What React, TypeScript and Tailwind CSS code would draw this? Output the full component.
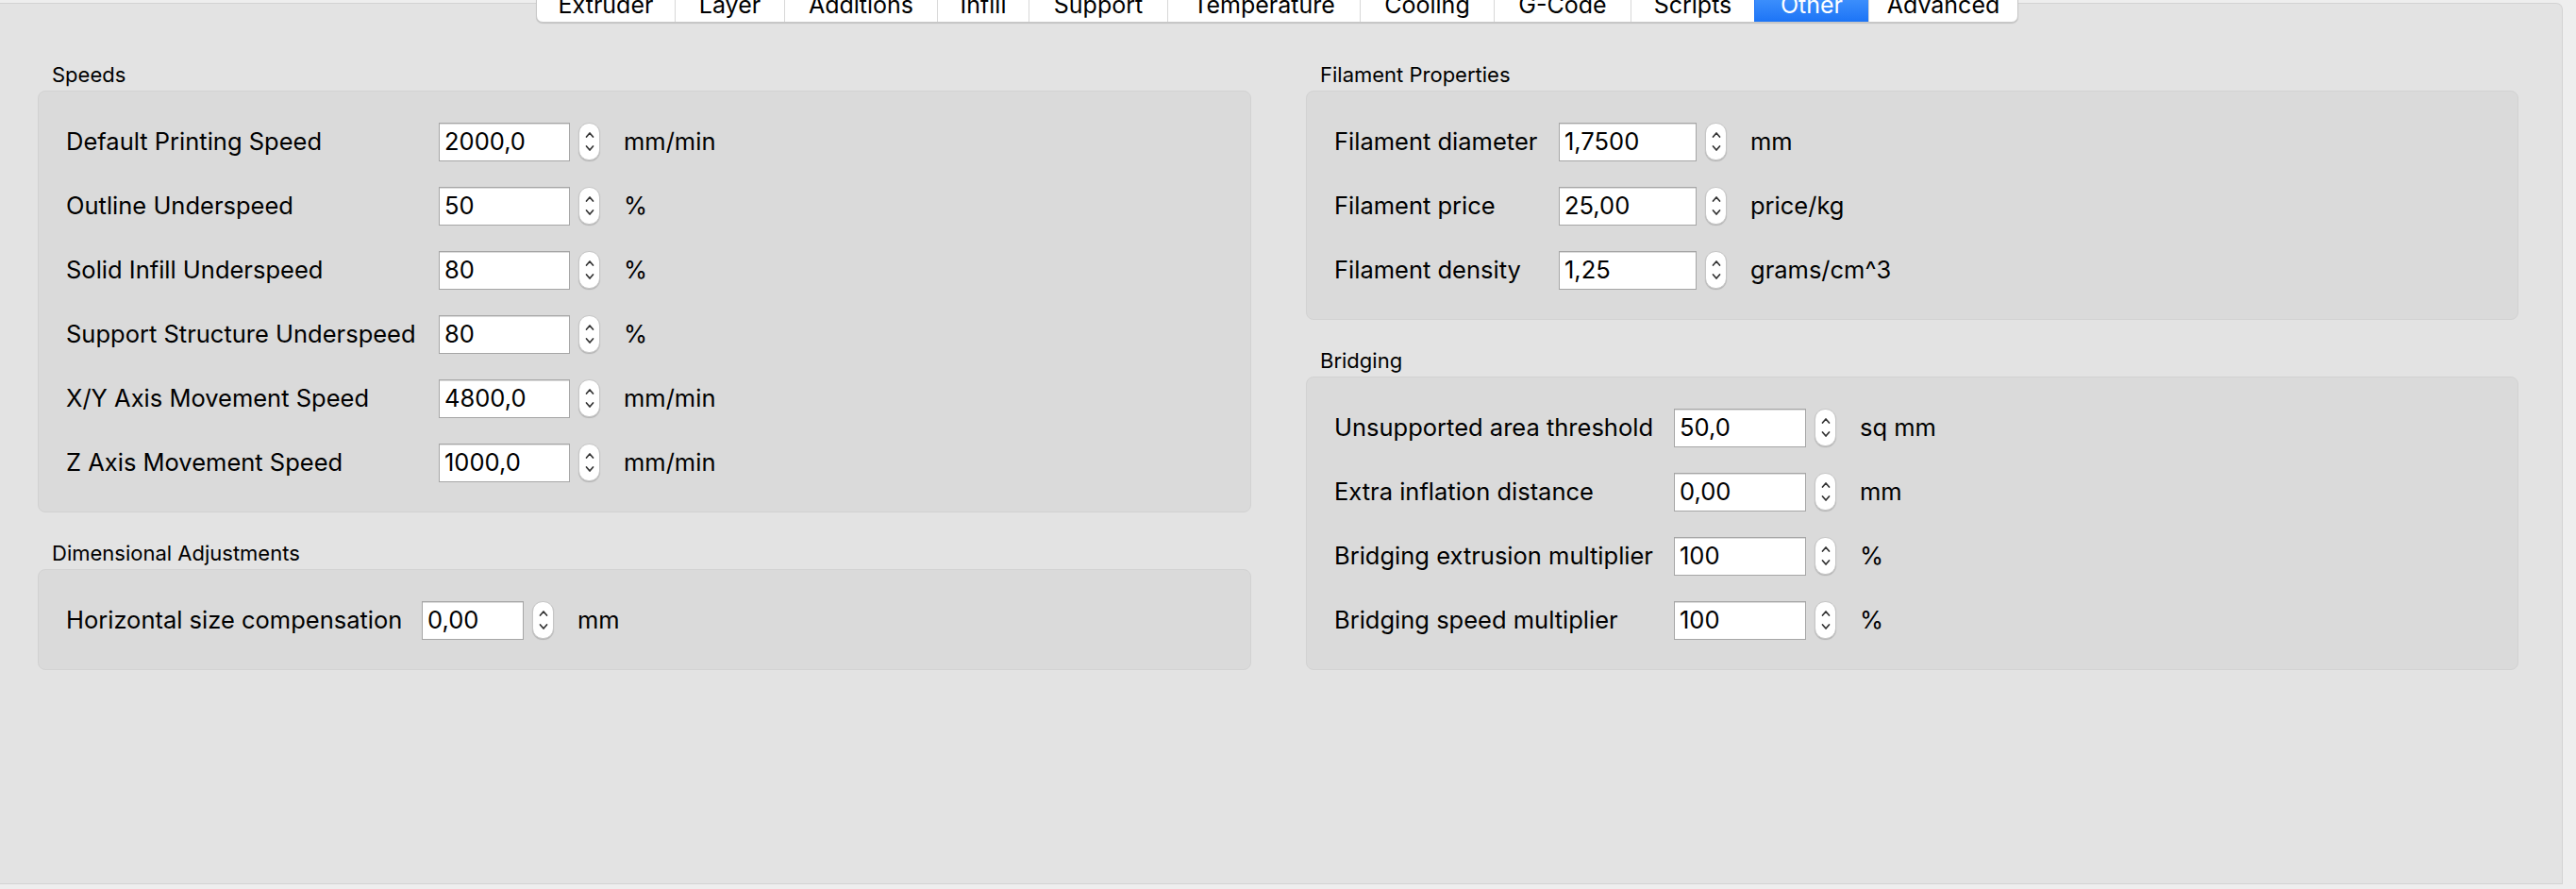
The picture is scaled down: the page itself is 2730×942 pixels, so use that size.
import React from 'react';

type Row = [string, string, string];

const tabs: { name: string; w: number }[] = [
    { name: 'Extruder', w: 146 },
    { name: 'Layer', w: 116 },
    { name: 'Additions', w: 162 },
    { name: 'Infill', w: 97 },
    { name: 'Support', w: 147 },
    { name: 'Temperature', w: 204 },
    { name: 'Cooling', w: 142 },
    { name: 'G-Code', w: 145 },
    { name: 'Scripts', w: 131 },
    { name: 'Other', w: 121 },
    { name: 'Advanced', w: 158 },
];

const speeds: Row[] = [
    ['Default Printing Speed', '2000,0', 'mm/min'],
    ['Outline Underspeed', '50', '%'],
    ['Solid Infill Underspeed', '80', '%'],
    ['Support Structure Underspeed', '80', '%'],
    ['X/Y Axis Movement Speed', '4800,0', 'mm/min'],
    ['Z Axis Movement Speed', '1000,0', 'mm/min'],
];

const dimensional: Row[] = [['Horizontal size compensation', '0,00', 'mm']];

const filament: Row[] = [
    ['Filament diameter', '1,7500', 'mm'],
    ['Filament price', '25,00', 'price/kg'],
    ['Filament density', '1,25', 'grams/cm^3'],
];

const bridging: Row[] = [
    ['Unsupported area threshold', '50,0', 'sq mm'],
    ['Extra inflation distance', '0,00', 'mm'],
    ['Bridging extrusion multiplier', '100', '%'],
    ['Bridging speed multiplier', '100', '%'],
];

const Stepper: React.FC = () => (
    <div className="w-[23px] h-[40px] rounded-[11px] bg-white border border-[#c6c6c6] shadow-[0_1px_1px_rgba(0,0,0,0.18)] flex flex-col items-center justify-between py-[8px]">
        <svg width="10" height="8" viewBox="0 0 10 8" fill="none">
            <path d="M1.5 6 L5 2 L8.5 6" stroke="#333" strokeWidth="1.7" strokeLinecap="round" strokeLinejoin="round" />
        </svg>
        <svg width="10" height="8" viewBox="0 0 10 8" fill="none">
            <path d="M1.5 2 L5 6 L8.5 2" stroke="#333" strokeWidth="1.7" strokeLinecap="round" strokeLinejoin="round" />
        </svg>
    </div>
);

const FieldRow: React.FC<{ row: Row; labelW: string; inputW: string }> = ({ row, labelW, inputW }) => (
    <div className="flex items-center h-[42px]">
        <div className={`${labelW} shrink-0 whitespace-nowrap`}>{row[0]}</div>
        <div className={`${inputW} h-[41px] bg-white border border-[#a6a6a6] shadow-[inset_0_1px_0_#dcdcdc] flex items-center pl-[5px]`}>
            {row[1]}
        </div>
        <div className="ml-[9px]">
            <Stepper />
        </div>
        <div className="ml-[25px] whitespace-nowrap">{row[2]}</div>
    </div>
);

const Group: React.FC<{ title: string; rows: Row[]; labelW: string; inputW: string }> = ({ title, rows, labelW, inputW }) => (
    <div>
        <div className="text-[22px] leading-[22px] h-[22px] mb-[6px] pl-[15px]">{title}</div>
        <div className="bg-[#dadada] border border-[#d2d2d2] rounded-[8px] pt-[32px] pb-[31px] pl-[29px] flex flex-col gap-[26px] text-[25.5px]">
            {rows.map((r) => (
                <FieldRow key={r[0]} row={r} labelW={labelW} inputW={inputW} />
            ))}
        </div>
    </div>
);

export default function App() {
    return (
        <div
            className="w-[2730px] h-[942px] bg-[#eeeeee] pt-[3px] overflow-hidden text-black"
            style={{ fontFamily: 'Inter, "Liberation Sans", sans-serif' }}
        >
            <div className="w-[2716px] h-[934px] bg-[#e3e3e3] border-t border-r border-b border-[#d3d3d3] rounded-tr-[7px]">
                {/* tab strip straddling the top edge */}
                <div className="flex -mt-[17px] ml-[568px] h-[37px] w-fit bg-white rounded-b-[7px] border border-[#c8c8c8] shadow-[0_1px_1px_rgba(0,0,0,0.15)] overflow-hidden text-[25px]">
                    {tabs.map((t, i) => (
                        <div
                            key={t.name}
                            style={{ width: t.w }}
                            className={`flex items-center justify-center ${i > 0 ? 'border-l border-[#d8d8d8]' : ''} ${
                                t.name === 'Other' ? 'bg-gradient-to-b from-[#4a9bff] to-[#1c74f6] text-white border-l-[#1c74f6]' : ''
                            }`}
                        >
                            {t.name}
                        </div>
                    ))}
                </div>

                <div className="flex mt-[44px] pl-[40px] gap-[58px]">
                    <div className="w-[1286px] flex flex-col gap-[32px]">
                        <Group title="Speeds" rows={speeds} labelW="w-[395px]" inputW="w-[139px]" />
                        <Group title="Dimensional Adjustments" rows={dimensional} labelW="w-[377px]" inputW="w-[108px]" />
                    </div>
                    <div className="w-[1285px] flex flex-col gap-[32px]">
                        <Group title="Filament Properties" rows={filament} labelW="w-[238px]" inputW="w-[146px]" />
                        <Group title="Bridging" rows={bridging} labelW="w-[360px]" inputW="w-[140px]" />
                    </div>
                </div>
            </div>
        </div>
    );
}
